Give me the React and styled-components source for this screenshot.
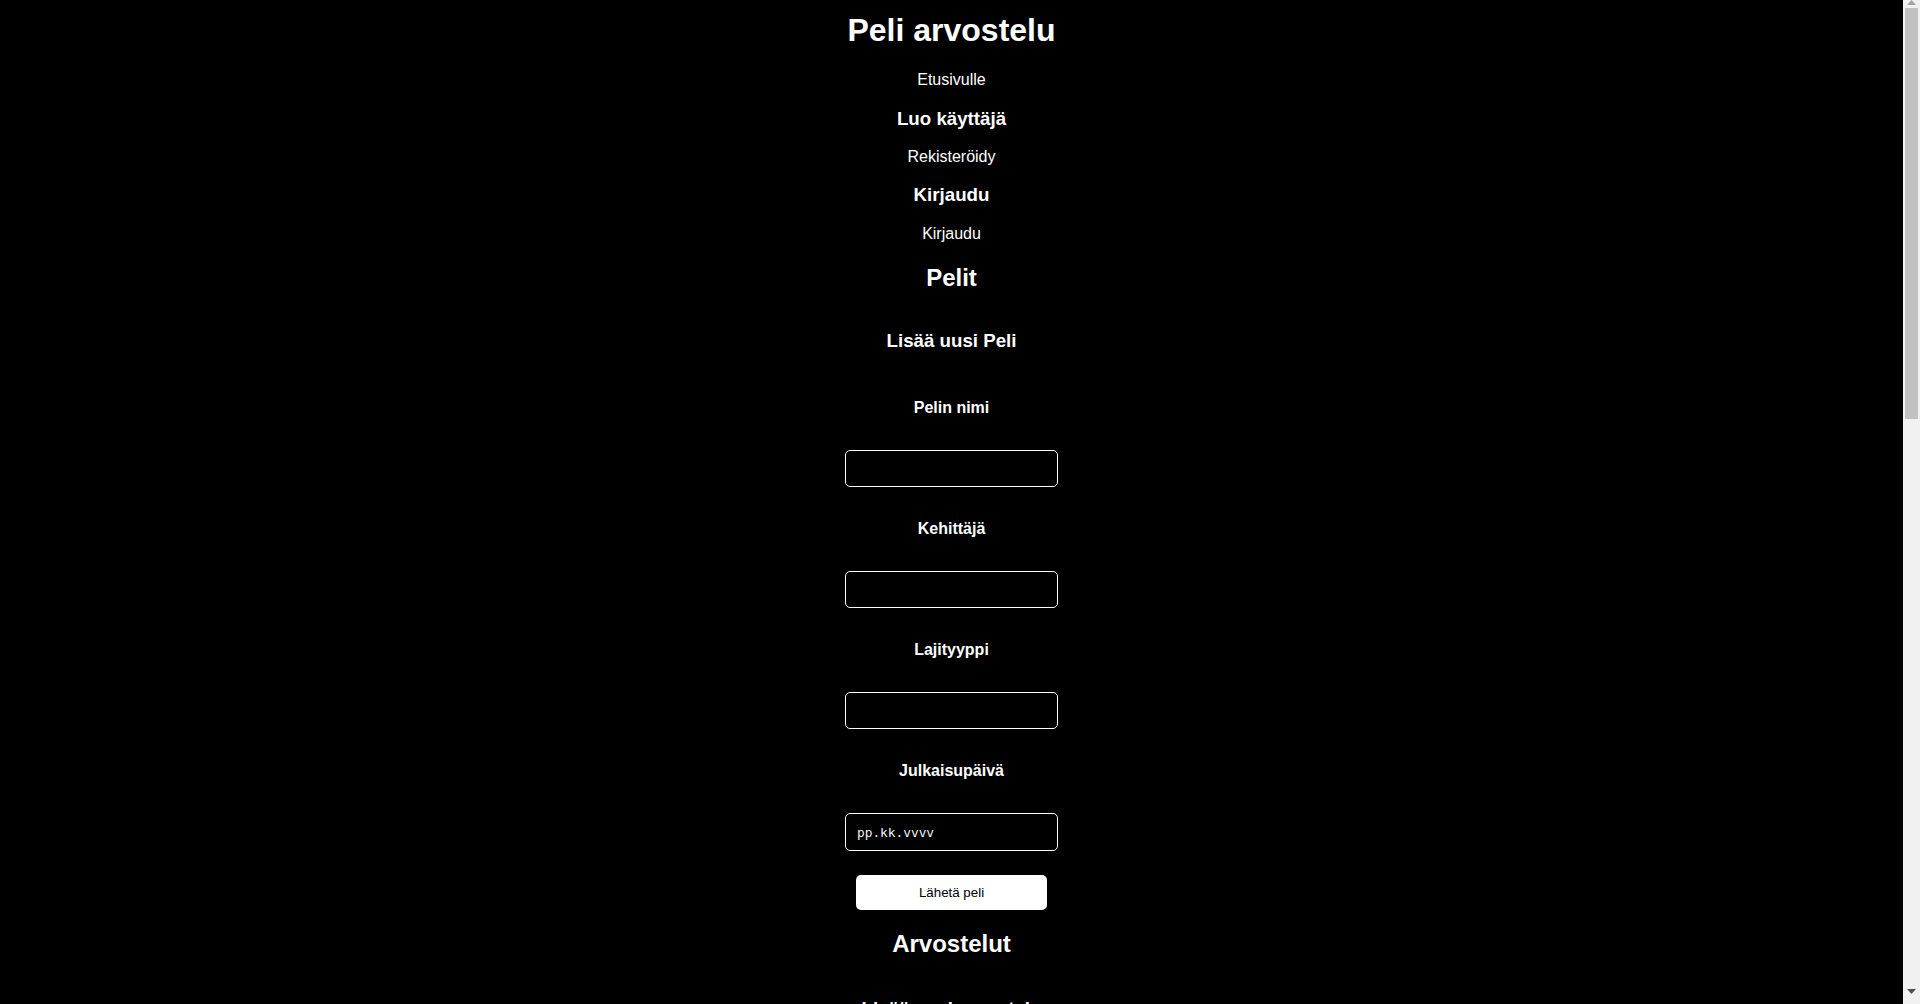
import React from "react";
import styled, { createGlobalStyle } from "styled-components";

const GlobalStyle = createGlobalStyle`
  html, body {
    margin: 0;
    padding: 0;
    background: #000;
  }
  body {
    color: #fff;
    font-family: "Liberation Sans", Arial, sans-serif;
  }
  * { box-sizing: border-box; }
`;

const Page = styled.div`
  display: flex;
  flex-direction: column;
  align-items: center;
  padding-top: 12px;
  padding-right: 17px;
  min-height: 2370px;
  text-align: center;
`;

const Title = styled.h1`
  margin: 0;
  font-size: 32px;
  font-weight: 700;
  line-height: normal;
`;

const NavLink = styled.a`
  display: block;
  margin-top: ${(p) => p.$top}px;
  font-size: 16px;
  line-height: normal;
  color: #fff;
  text-decoration: none;
  cursor: pointer;
`;

const SectionTitle = styled.h2`
  margin: ${(p) => p.$top}px 0 0;
  font-size: 24px;
  font-weight: 700;
  line-height: normal;
`;

const SubTitle = styled.h3`
  margin: ${(p) => p.$top}px 0 0;
  font-size: 18.72px;
  font-weight: 700;
  line-height: normal;
`;

const Form = styled.form`
  display: flex;
  flex-direction: column;
  align-items: center;
`;

const FieldLabel = styled.label`
  display: block;
  margin-top: ${(p) => p.$top}px;
  font-size: 16px;
  font-weight: 700;
  line-height: normal;
`;

const TextInput = styled.input`
  display: block;
  margin-top: 33px;
  width: 213px;
  height: ${(p) => (p.$mono ? 38 : 37)}px;
  padding: 0 11px;
  border: 1px solid #fff;
  border-radius: 5px;
  background: #000;
  color: #fff;
  font-family: ${(p) =>
    p.$mono ? '"DejaVu Sans Mono", "Liberation Mono", monospace' : '"Liberation Sans", Arial, sans-serif'};
  font-size: 12.8px;
  outline: none;
  &::placeholder {
    color: #f4f4f4;
    opacity: 1;
  }
`;

const SubmitButton = styled.button`
  margin-top: 24px;
  width: 191px;
  height: 35px;
  border: none;
  border-radius: 5px;
  background: #fff;
  color: #000;
  font-family: "Liberation Sans", Arial, sans-serif;
  font-size: 13.33px;
  cursor: pointer;
`;

const ScrollTrack = styled.div`
  position: fixed;
  top: 0;
  right: 0;
  width: 17px;
  height: 100vh;
  background: #f1f1f1;
`;

const ScrollThumb = styled.div`
  position: absolute;
  left: 2px;
  right: 2px;
  top: 8px;
  height: 411px;
  background: #c1c1c1;
`;

const ScrollArrow = styled.svg`
  position: absolute;
  left: 4px;
  ${(p) => (p.$down ? "bottom: 10px;" : "top: 0px;")}
  width: 9px;
  height: 5px;
`;

function Field({ label, top, mono, placeholder }) {
  return (
    <>
      <FieldLabel $top={top}>{label}</FieldLabel>
      <TextInput $mono={mono} placeholder={placeholder} type="text" />
    </>
  );
}

export default function App() {
  return (
    <>
      <GlobalStyle />
      <Page>
        <Title>Peli arvostelu</Title>
        <NavLink $top={21.6}>Etusivulle</NavLink>
        <SubTitle $top={19}>Luo käyttäjä</SubTitle>
        <NavLink $top={18.2}>Rekisteröidy</NavLink>
        <SubTitle $top={18.6}>Kirjaudu</SubTitle>
        <NavLink $top={18.6}>Kirjaudu</NavLink>
        <SectionTitle $top={21}>Pelit</SectionTitle>
        <SubTitle $top={37.8}>Lisää uusi Peli</SubTitle>
        <Form onSubmit={(e) => e.preventDefault()}>
          <Field label="Pelin nimi" top={47.6} />
          <Field label="Kehittäjä" top={32.8} />
          <Field label="Lajityyppi" top={33} />
          <Field label="Julkaisupäivä" top={33} mono placeholder="pp.kk.vvvv" />
          <SubmitButton type="submit">Lähetä peli</SubmitButton>
        </Form>
        <SectionTitle $top={19.5}>Arvostelut</SectionTitle>
        <SubTitle $top={40.5}>Lisää uusi arvostelu</SubTitle>
        <Form onSubmit={(e) => e.preventDefault()}>
          <Field label="Peli" top={47.6} />
          <Field label="Arvosana" top={32.8} />
          <Field label="Arvostelu" top={32.8} />
          <SubmitButton type="submit">Lähetä arvostelu</SubmitButton>
        </Form>
      </Page>
      <ScrollTrack aria-hidden="true">
        <ScrollArrow viewBox="0 0 9 5">
          <path d="M0 5 L4.5 0 L9 5 Z" fill="#a3a3a3" />
        </ScrollArrow>
        <ScrollThumb />
        <ScrollArrow $down viewBox="0 0 9 5">
          <path d="M0 0 L9 0 L4.5 5 Z" fill="#505050" />
        </ScrollArrow>
      </ScrollTrack>
    </>
  );
}
